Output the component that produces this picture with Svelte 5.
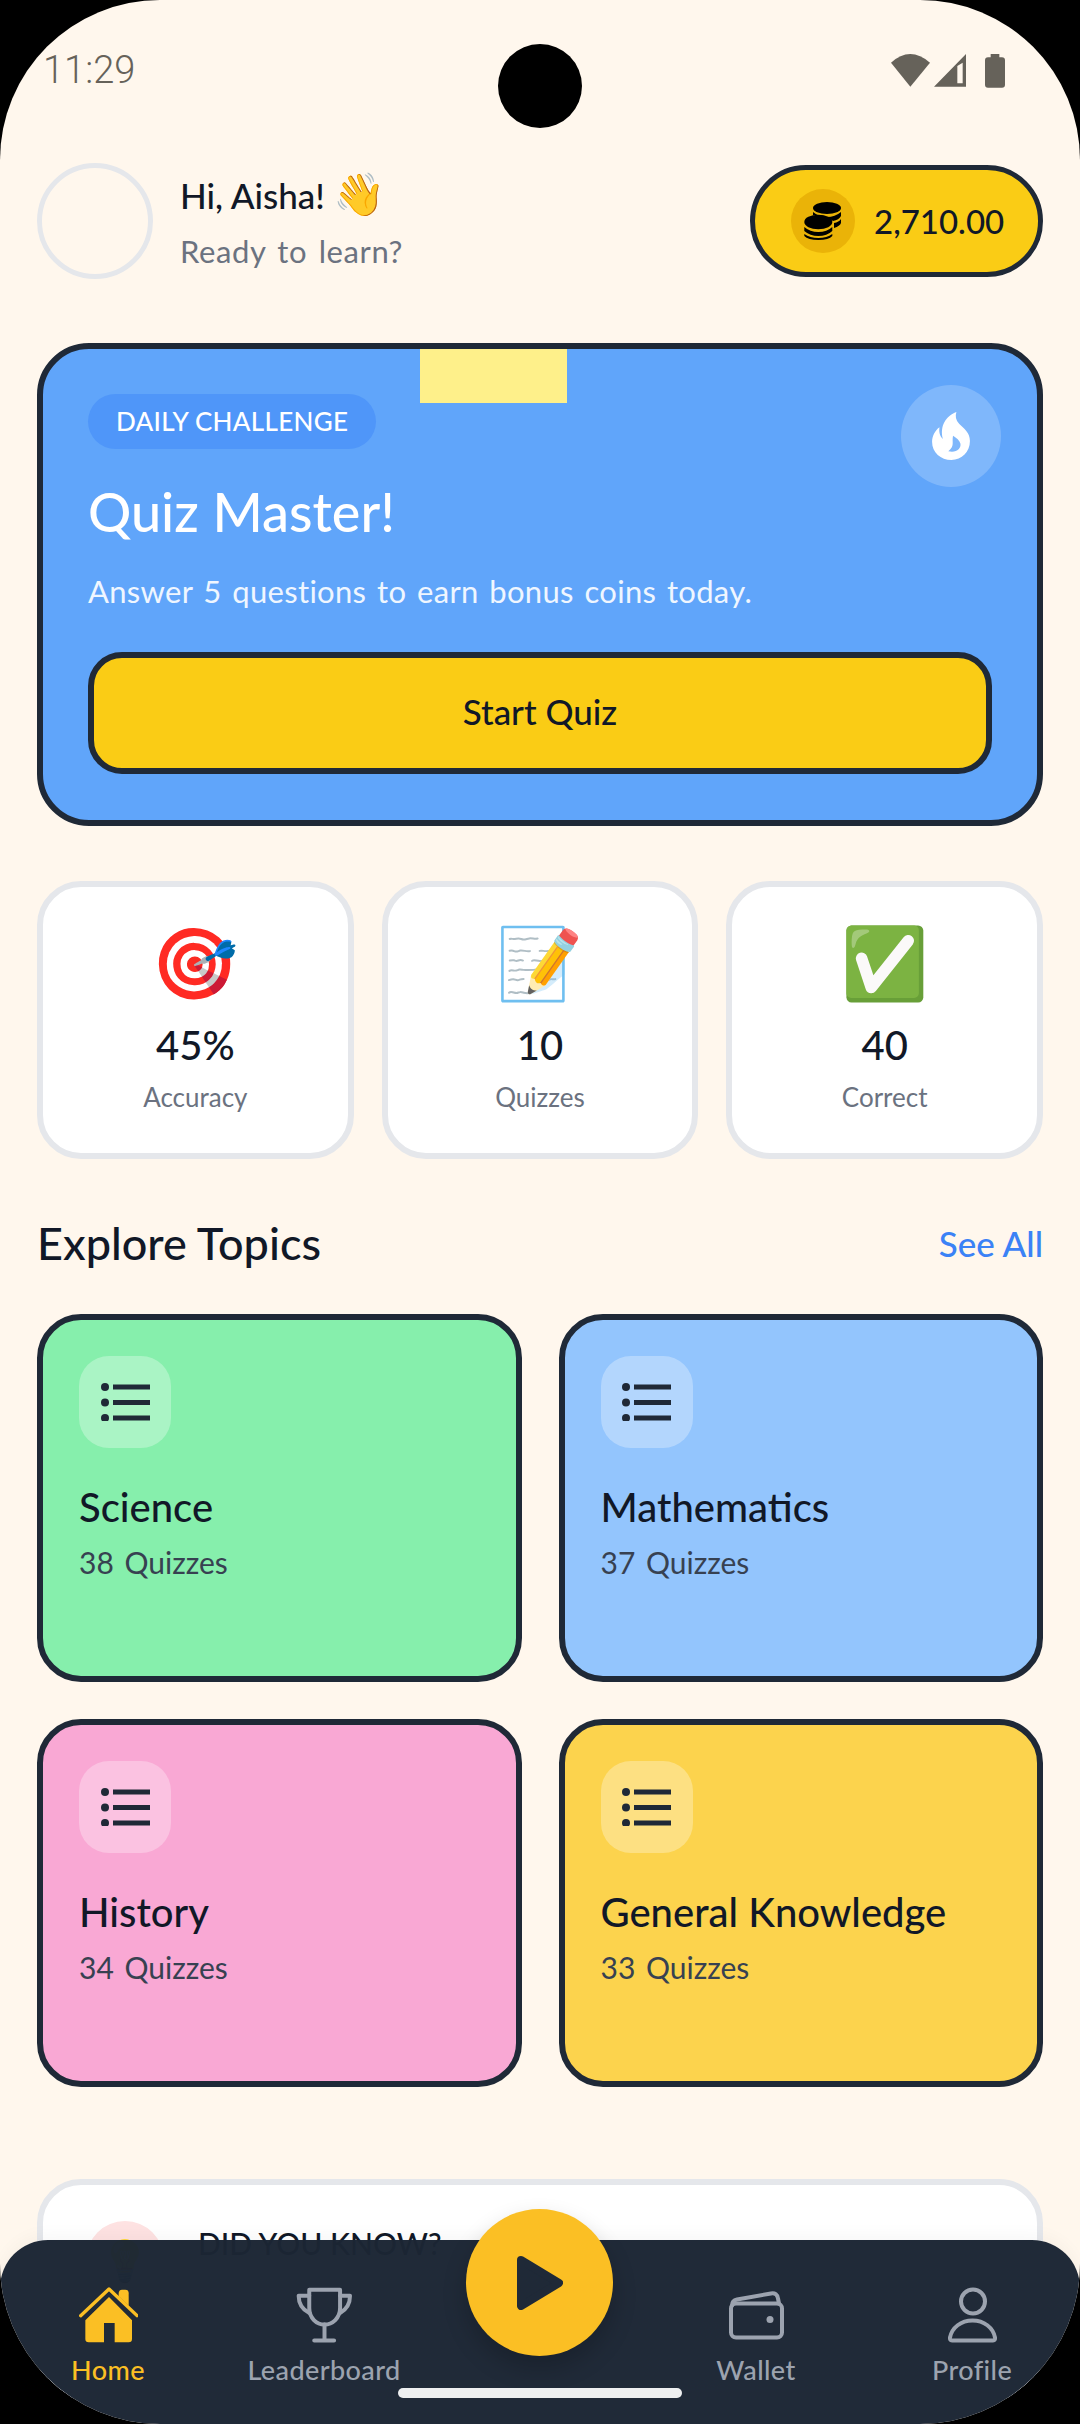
<script>
  const stats = [
    { icon: '🎯', value: '45%', label: 'Accuracy' },
    { icon: '📝', value: '10', label: 'Quizzes' },
    { icon: '✅', value: '40', label: 'Correct' }
  ];

  const topics = [
    { name: 'Science', count: 38, color: '#86efac' },
    { name: 'Mathematics', count: 37, color: '#93c5fd' },
    { name: 'History', count: 34, color: '#f9a8d4' },
    { name: 'General Knowledge', count: 33, color: '#fcd34d' }
  ];
</script>

<div class="screen">
  <div class="camera"></div>

  <div class="status">
    <span class="time">11:29</span>
    <svg class="status-icons" viewBox="0 0 450 180" aria-hidden="true">
      <path d="M33 68 Q90 16 150 68 L91 140 Z" />
      <path fill-rule="evenodd" d="M162 140 L258 42 V140 Z M232 78 V130 H248 V68 Z" />
      <path d="M332 42 H358 V52 H366 Q375 52 375 61 V134 Q375 143 366 143 H324 Q315 143 315 134 V61 Q315 52 324 52 H332 Z" />
    </svg>
  </div>

  <main>
    <header class="top">
      <div class="avatar"></div>
      <div class="hello">
        <div class="hi">Hi, Aisha! <span class="wave">👋</span></div>
        <div class="ready">Ready to learn?</div>
      </div>
      <div class="coins">
        <span class="coin-icon">
          <svg viewBox="0 0 64 64" width="64" height="64" aria-hidden="true">
            <ellipse cx="36" cy="19" rx="14" ry="6" fill="#000" />
            <path d="M22 23 Q28 28 36 28 Q44 28 50 23 V27 Q48 31 42 32 Q36 27 28 26 L22 26 Z" fill="#000" />
            <path d="M43 34 Q48 33 50 30 V34 Q49 37 43 39 Z" fill="#000" />
            <ellipse cx="27.3" cy="33" rx="14" ry="7.3" fill="#000" />
            <path d="M13.3 38 Q19 43 27.3 43 Q36 43 41.3 38 V42 Q36 47 27.3 47 Q19 47 13.3 42 Z" fill="#000" />
            <path d="M13.3 45 Q19 49 27.3 49 Q36 49 41.3 45 V47 Q38 51 27.3 51 Q17 51 13.3 47 Z" fill="#000" />
          </svg>
        </span>
        <span class="coin-value">2,710.00</span>
      </div>
    </header>

    <section class="hero">
      <div class="tape"></div>
      <div class="flame">
        <svg viewBox="128 110 112 142" width="38" height="48" aria-hidden="true">
          <path
            fill="#fff"
            fill-rule="evenodd"
            d="M200 110 C170 122 150 150 160 190 C150 180 148 168 150 155 C136 165 128 182 128 198 C128 230 154 252 185 252 C216 252 240 228 240 196 C240 170 222 160 208 145 C198 134 196 122 200 110 Z M190 180 C186 200 196 210 176 226 C200 232 214 218 212 204 C210 194 200 186 190 180 Z"
          />
        </svg>
      </div>
      <span class="badge">DAILY CHALLENGE</span>
      <h1>Quiz Master!</h1>
      <p>Answer 5 questions to earn bonus coins today.</p>
      <button class="start">Start Quiz</button>
    </section>

    <section class="stats">
      {#each stats as s}
        <div class="stat">
          <div class="stat-icon">{s.icon}</div>
          <div class="stat-value">{s.value}</div>
          <div class="stat-label">{s.label}</div>
        </div>
      {/each}
    </section>

    <div class="section-head">
      <h2>Explore Topics</h2>
      <span class="see-all">See All</span>
    </div>

    <section class="topics">
      {#each topics as t}
        <div class="topic" style="background: {t.color}">
          <div class="topic-icon">
            <svg viewBox="0 0 49 38" width="49" height="38" aria-hidden="true">
              <circle cx="4" cy="4" r="4" />
              <circle cx="4" cy="19.5" r="4" />
              <circle cx="4" cy="35" r="4" />
              <rect x="12" y="1.5" width="37" height="5" />
              <rect x="12" y="17" width="37" height="5" />
              <rect x="12" y="32.5" width="37" height="5" />
            </svg>
          </div>
          <div class="topic-name">{t.name}</div>
          <div class="topic-count">{t.count} Quizzes</div>
        </div>
      {/each}
    </section>

    <section class="fact">
      <div class="fact-icon">💡</div>
      <div class="fact-title">DID YOU KNOW?</div>
    </section>
  </main>

  <nav class="bottom">
    <div class="item active">
      <svg viewBox="113 262 177 168" width="59" height="56" aria-hidden="true">
        <path d="M232 282 Q232 270 242 270 H252 Q262 270 262 280 V318 L232 290 Z" fill="#fbbf24" />
        <path d="M118 348 L203 268 L287 348" fill="none" stroke="#fbbf24" stroke-width="10" stroke-linecap="round" stroke-linejoin="round" />
        <path d="M132 362 L203 292 L272 362 V418 Q272 428 262 428 H220 V370 H188 V428 H142 Q132 428 132 418 Z" fill="#fbbf24" />
      </svg>
      <span>Home</span>
    </div>
    <div class="item">
      <svg viewBox="765 262 172 168" width="57" height="56" fill="none" stroke="#9ca3af" stroke-width="12" stroke-linecap="round" stroke-linejoin="round" aria-hidden="true">
        <path d="M805 270 H898 V325 C898 355 875 375 851 375 C827 375 805 355 805 325 Z" />
        <path d="M805 288 H773 C773 315 785 330 805 340" />
        <path d="M898 288 H928 C928 315 916 330 898 340" />
        <path d="M851 375 V423 M820 423 H880" />
      </svg>
      <span>Leaderboard</span>
    </div>
    <div class="item spacer"></div>
    <div class="item">
      <svg viewBox="0 0 55 49" width="55" height="49" fill="none" stroke="#9ca3af" stroke-width="4" stroke-linecap="round" stroke-linejoin="round" aria-hidden="true">
        <rect x="2" y="13" width="51" height="34" rx="5" />
        <path d="M3 15 Q3 10 8 9 L42 3 Q48 2 49 8 L50 13" />
        <circle cx="41" cy="29" r="3.5" fill="#9ca3af" stroke="none" />
      </svg>
      <span>Wallet</span>
    </div>
    <div class="item">
      <svg viewBox="0 0 51 55" width="51" height="55" fill="none" stroke="#9ca3af" stroke-width="4" stroke-linejoin="round" aria-hidden="true">
        <circle cx="26" cy="14" r="12" />
        <path d="M3 50 C5 40 14 33 25.5 33 C37 33 46 40 48 50 Q48.5 53 46 53 H5 Q2.5 53 3 50 Z" />
      </svg>
      <span>Profile</span>
    </div>

    <button class="play" aria-label="Play">
      <svg viewBox="0 0 46 54" width="46" height="54" aria-hidden="true">
        <path d="M4 4 L42 27 L4 50 Z" fill="#1f2937" stroke="#1f2937" stroke-width="8" stroke-linejoin="round" />
      </svg>
    </button>
    <div class="home-bar"></div>
  </nav>
</div>

<style>
  :global(body) {
    background: #000;
  }
  .screen {
    position: relative;
    width: 1080px;
    height: 2424px;
    overflow: hidden;
    border-radius: 160px;
    background: #fff7ed;
    font-family: 'Lato', 'Noto Color Emoji', sans-serif;
    color: #111827;
  }
  .camera {
    position: absolute;
    top: 44px;
    left: 498px;
    width: 84px;
    height: 84px;
    border-radius: 50%;
    background: #000;
  }
  .status {
    display: flex;
    align-items: flex-start;
    justify-content: space-between;
    height: 163px;
    padding: 0 50px 0 43px;
    box-sizing: border-box;
  }
  .time {
    margin-top: 49px;
    font-family: 'Roboto', sans-serif;
    font-size: 38px;
    line-height: 42px;
    font-weight: 300;
    color: #66625a;
  }
  .status-icons {
    width: 150px;
    height: 60px;
    margin-top: 40px;
    fill: #66625a;
  }
  main {
    padding: 0 37px;
  }
  .top {
    display: flex;
    align-items: center;
  }
  .avatar {
    width: 116px;
    height: 116px;
    box-sizing: border-box;
    border: 5px solid #e5e7eb;
    border-radius: 50%;
  }
  .hello {
    flex: 1;
    margin-left: 27px;
    padding-top: 7px;
  }
  .hi {
    font-size: 35px;
    line-height: 56px;
    font-weight: 500;
    margin-top: -4px;
  }
  .wave {
    font-size: 42px;
    line-height: 40px;
  }
  .ready {
    font-size: 31px;
    line-height: 56px;
    word-spacing: 3px;
    letter-spacing: 0.6px;
    color: #6b7280;
  }
  .coins {
    display: flex;
    align-items: center;
    gap: 19px;
    width: 293px;
    height: 112px;
    box-sizing: border-box;
    padding-left: 36px;
    border: 5px solid #1f2937;
    border-radius: 56px;
    background: #facc15;
  }
  .coin-icon {
    display: block;
    width: 64px;
    height: 64px;
    border-radius: 50%;
    background: #eab308;
  }
  .coin-icon svg {
    display: block;
  }
  .coin-value {
    font-size: 33px;
    font-weight: 500;
  }
  .hero {
    position: relative;
    margin-top: 64px;
    padding: 45px 45px 46px;
    border: 6px solid #1f2937;
    border-radius: 52px;
    background: #60a5fa;
    color: #fff;
  }
  .tape {
    position: absolute;
    top: 0;
    left: 377px;
    width: 147px;
    height: 54px;
    background: #fef08a;
  }
  .flame {
    position: absolute;
    top: 36px;
    right: 36px;
    display: flex;
    align-items: center;
    justify-content: center;
    width: 100px;
    height: 102px;
    border-radius: 50%;
    background: rgba(255, 255, 255, 0.2);
  }
  .badge {
    display: inline-block;
    height: 55px;
    padding: 0 28px;
    border-radius: 28px;
    background: #4f96f9;
    font-size: 26px;
    line-height: 55px;
    font-weight: 500;
    letter-spacing: 0.3px;
    vertical-align: top;
  }
  h1 {
    margin: 23px 0 0;
    font-size: 54px;
    line-height: 80px;
    font-weight: 500;
  }
  p {
    margin: 19px 0 0;
    font-size: 31px;
    line-height: 40px;
    word-spacing: 2.5px;
    letter-spacing: 0.3px;
    color: #eff6ff;
  }
  .start {
    display: block;
    width: 100%;
    height: 122px;
    margin-top: 41px;
    padding-bottom: 6px;
    border: 6px solid #1f2937;
    border-radius: 34px;
    background: #facc15;
    color: #111827;
    font-family: inherit;
    font-size: 35px;
    font-weight: 500;
  }
  .stats {
    display: grid;
    grid-template-columns: repeat(3, 1fr);
    gap: 28px;
    margin-top: 55px;
  }
  .stat {
    height: 278px;
    box-sizing: border-box;
    padding-top: 32px;
    border: 6px solid #e5e7eb;
    border-radius: 44px;
    background: #fff;
    text-align: center;
  }
  .stat-icon {
    font-size: 70px;
    line-height: 84px;
  }
  .stat-value {
    margin-top: 17px;
    font-size: 40px;
    line-height: 50px;
    font-weight: 500;
  }
  .stat-label {
    margin-top: 9px;
    font-size: 26px;
    line-height: 36px;
    color: #6b7280;
  }
  .section-head {
    display: flex;
    align-items: center;
    justify-content: space-between;
    margin-top: 54px;
    height: 60px;
  }
  h2 {
    margin: 0;
    font-size: 45px;
    font-weight: 500;
  }
  .see-all {
    font-size: 35px;
    font-weight: 500;
    color: #3b82f6;
  }
  .topics {
    display: grid;
    grid-template-columns: repeat(2, 1fr);
    gap: 37px;
    margin-top: 41px;
  }
  .topic {
    height: 368px;
    box-sizing: border-box;
    padding: 36px;
    border: 6px solid #1f2937;
    border-radius: 44px;
  }
  .topic-icon {
    display: flex;
    align-items: center;
    justify-content: center;
    width: 92px;
    height: 92px;
    border-radius: 30px;
    background: rgba(255, 255, 255, 0.3);
  }
  .topic-icon svg {
    fill: #1f2937;
  }
  .topic-name {
    margin-top: 34px;
    font-size: 40px;
    line-height: 50px;
    font-weight: 500;
  }
  .topic-count {
    margin-top: 10px;
    font-size: 30px;
    line-height: 40px;
    word-spacing: 3px;
    color: #374151;
  }
  .fact {
    display: flex;
    align-items: flex-start;
    gap: 34px;
    height: 220px;
    box-sizing: border-box;
    margin-top: 92px;
    padding: 36px 43px;
    border: 6px solid #e5e7eb;
    border-radius: 44px;
    background: #fff;
  }
  .fact-icon {
    width: 78px;
    height: 78px;
    border-radius: 50%;
    background: #fee2e2;
    font-size: 40px;
    line-height: 78px;
    text-align: center;
  }
  .fact-title {
    font-size: 30px;
    line-height: 44px;
    font-weight: 500;
  }
  .bottom {
    position: absolute;
    left: 0;
    right: 0;
    bottom: 0;
    display: grid;
    grid-template-columns: repeat(5, 1fr);
    height: 184px;
    box-sizing: border-box;
    padding-top: 47px;
    border-radius: 48px 48px 0 0;
    background: rgba(28, 38, 52, 0.98);
    box-shadow: 0 -6px 16px rgba(0, 0, 0, 0.03);
  }
  .item {
    display: flex;
    flex-direction: column;
    align-items: center;
    color: #9ca3af;
    font-size: 27px;
    font-weight: 500;
    letter-spacing: 0.4px;
  }
  .item svg {
    display: block;
    height: 56px;
  }
  .item span {
    margin-top: 9px;
    line-height: 36px;
  }
  .item.active {
    color: #fbbf24;
  }
  .play {
    position: absolute;
    top: -31px;
    left: 466px;
    display: flex;
    align-items: center;
    justify-content: center;
    width: 147px;
    height: 147px;
    padding: 0;
    border: none;
    border-radius: 50%;
    background: #fbbf24;
    box-shadow: 0 12px 24px rgba(0, 0, 0, 0.2);
  }
  .home-bar {
    position: absolute;
    left: 398px;
    top: 148px;
    width: 284px;
    height: 10px;
    border-radius: 5px;
    background: #eeeff0;
  }
</style>
